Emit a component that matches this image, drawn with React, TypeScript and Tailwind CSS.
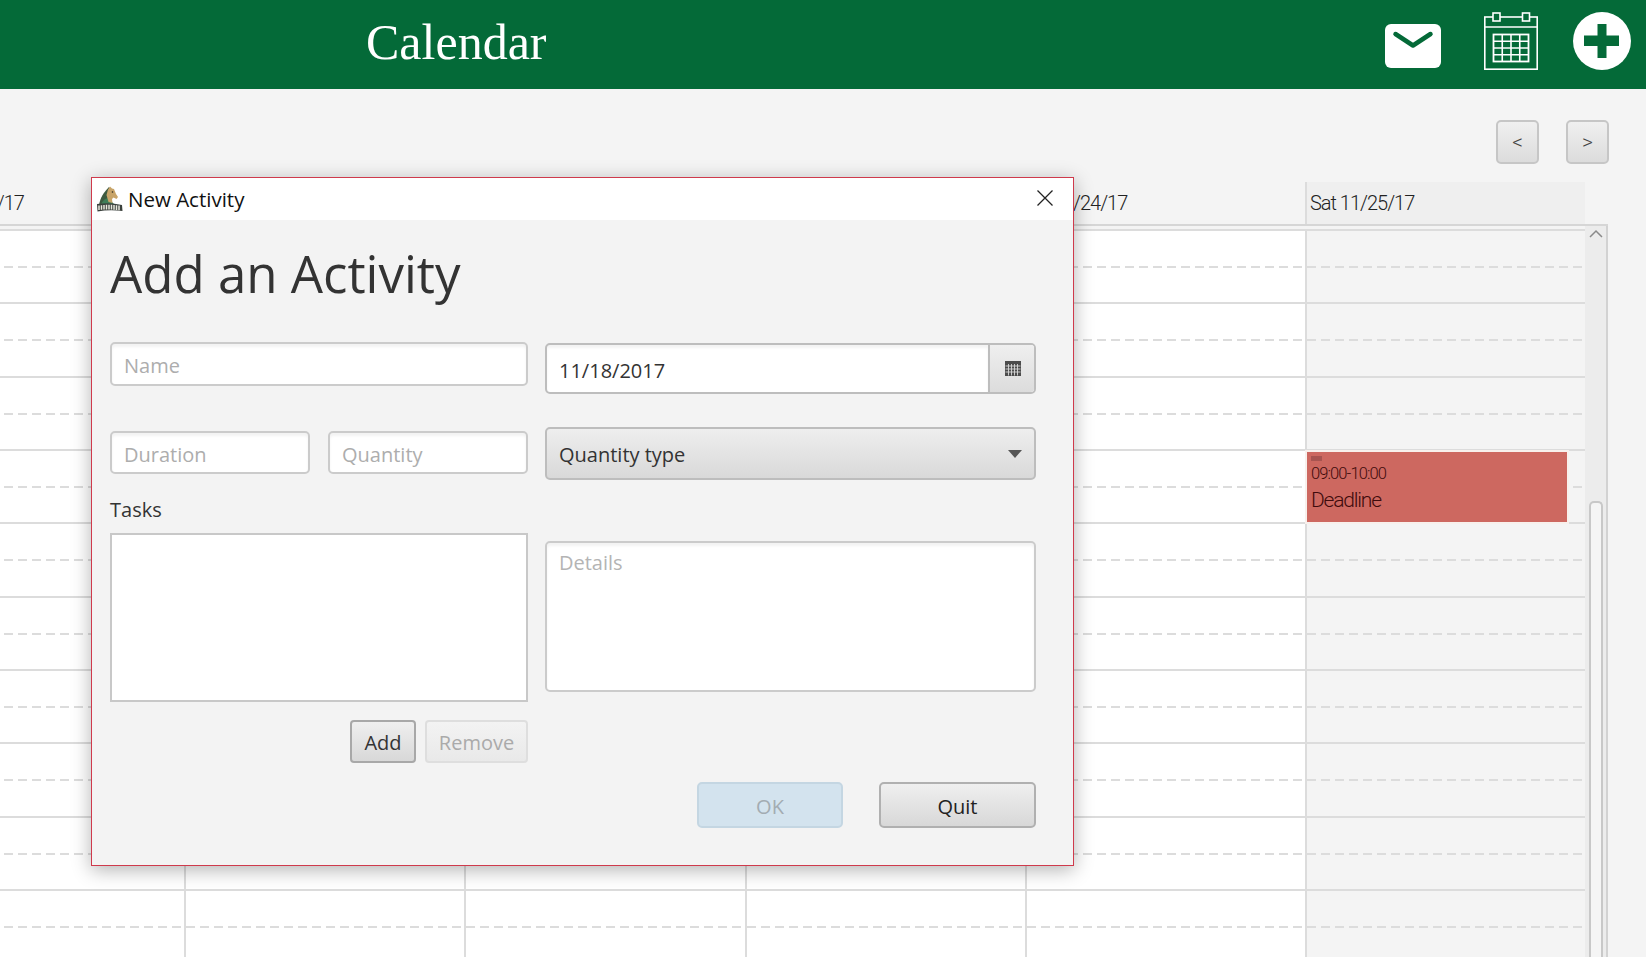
const days = [
  { label: "Mon 11/20/17", weekend: false, hidden: false },
  { label: "Tue 11/21/17", weekend: false, hidden: true },
  { label: "Wed 11/22/17", weekend: false, hidden: true },
  { label: "Thu 11/23/17", weekend: false, hidden: true },
  { label: "Fri 11/24/17", weekend: false, hidden: false },
  { label: "Sat 11/25/17", weekend: true, hidden: false },
];

const rows = Array.from({ length: 10 }, (_, i) => i);

function MailIcon() {
  return (
    <svg width="56" height="44" viewBox="0 0 56 44">
      <rect width="56" height="44" rx="6" fill="#ffffff" />
      <path d="M10.5 10 L28 21.5 L45.5 10" fill="none" stroke="#046a38" strokeWidth="4.5" strokeLinecap="round" strokeLinejoin="round" />
    </svg>
  );
}

function CalendarIcon() {
  return (
    <svg width="54" height="58" viewBox="0 0 54 58" fill="none" stroke="#ffffff" strokeWidth="1.6">
      <rect x="0.8" y="5" width="52.4" height="52.2" />
      <path d="M0.8 15 H53.2" />
      <rect x="9" y="1" width="7" height="8" fill="#046a38" />
      <rect x="38.5" y="1" width="7" height="8" fill="#046a38" />
      <rect x="9.5" y="22.5" width="35" height="27" strokeWidth="1.8" />
      <path d="M18.25 22.5 V49.5 M27 22.5 V49.5 M35.75 22.5 V49.5 M9.5 29.25 H44.5 M9.5 36 H44.5 M9.5 42.75 H44.5" />
    </svg>
  );
}

function PlusIcon() {
  return (
    <svg width="58" height="58" viewBox="0 0 58 58">
      <circle cx="29" cy="29" r="29" fill="#ffffff" />
      <path d="M24.5 12 H33.5 V23.5 H46 V34 H33.5 V46 H24.5 V34 H11 V23.5 H24.5 Z" fill="#046a38" />
    </svg>
  );
}

function Logo() {
  return (
    <svg width="27" height="26" viewBox="0 0 27 26">
      <path d="M3 19 C4 12 8 6 13 1 L15 4 L13 17 Z" fill="#3d5a40" />
      <path d="M5 18 C7 14 10 12 12 12 L18 18 Z" fill="#3f7d58" />
      <path d="M12 3.5 L14 0.5 L16 2.5 L18 3 L20 8 L22 11 L20.5 13 L17.5 11.5 L16 13 L16.5 17 L12.5 16 L10.5 9 Z" fill="#c8a469" />
      <circle cx="16.5" cy="6" r="0.8" fill="#2a2a22" />
      <path d="M1 18 Q13.5 16 26 19 L26.5 25 Q13 23.5 1.5 25.5 Z" fill="#3b413d" />
      <path d="M3 19.5 V24 M5.5 19.2 V23.8 M8 19 V23.6 M10.5 18.8 V23.5 M13 18.7 V23.5 M15.5 18.8 V23.6 M18 19 V23.8 M20.5 19.2 V24 M23 19.5 V24.2" stroke="#e9e8dd" strokeWidth="1.5" />
    </svg>
  );
}

function DateGlyph() {
  return (
    <svg width="16" height="15" viewBox="0 0 16 15">
      <rect width="16" height="15" fill="#4c4c4c" />
      <path d="M0.5 5 H15.5 M0.5 8 H15.5 M0.5 11 H15.5 M3.5 3 V14.5 M6.5 3 V14.5 M9.5 3 V14.5 M12.5 3 V14.5" stroke="#d8d8d8" strokeWidth="0.9" />
    </svg>
  );
}

function GridColumn({ weekend }: { weekend: boolean }) {
  return (
    <div className={`w-[280.2px] shrink-0 border-l-2 border-t-2 border-[#dcdcdc] ${weekend ? "bg-[#f4f4f4]" : "bg-white"}`}>
      {rows.map((r) => (
        <div key={r} className="h-[73.33px] border-b-2 border-[#dcdcdc] pt-[35px]">
          <div className="h-[2px] bg-[repeating-linear-gradient(90deg,#dcdcdc_0,#dcdcdc_9px,transparent_9px,transparent_14px)]" />
        </div>
      ))}
    </div>
  );
}

const inputBox = "bg-white border-2 border-[#cbcbcb] rounded-[5px] shadow-[inset_0_3px_3px_rgba(0,0,0,0.05)]";
const ph = "text-[20px] text-[#adadad] leading-none";

export default function App() {
  return (
    <div className="relative h-[957px] w-[1646px] overflow-hidden bg-[#f4f4f4] font-['Open_Sans',sans-serif]">
      <header className="h-[89px] bg-[#046a38] flex items-start">
        <h1 className="ml-[366px] mt-[13px] text-[50px] leading-[58px] text-white font-['Liberation_Serif',serif] font-normal">Calendar</h1>
        <div className="ml-auto flex items-start">
          <div className="mt-[24px] mr-[43px]"><MailIcon /></div>
          <div className="mt-[12px] mr-[35px]"><CalendarIcon /></div>
          <div className="mt-[12px] mr-[15px]"><PlusIcon /></div>
        </div>
      </header>

      <div className="h-[93px] flex items-start justify-end pt-[31px] pr-[37px] gap-[27px] font-['Roboto',sans-serif]">
        <button className="w-[43px] h-[44px] pt-[2px] rounded-[5px] border-2 border-[#c6c6c6] bg-gradient-to-b from-[#f0f0f0] to-[#dcdcdc] text-[#444] text-[21px] font-light">&lt;</button>
        <button className="w-[43px] h-[44px] pt-[2px] rounded-[5px] border-2 border-[#c6c6c6] bg-gradient-to-b from-[#f0f0f0] to-[#dcdcdc] text-[#444] text-[21px] font-light">&gt;</button>
      </div>

      <div className="flex -ml-[96px] h-[42px] font-['Roboto',sans-serif]">
        {days.map((d) => (
          <div key={d.label} className={`w-[280.2px] shrink-0 flex items-center pl-[3px] border-l-2 text-[20px] tracking-[-1px] font-light text-[#222] ${d.weekend ? "bg-[#efefef] border-[#dcdcdc]" : "border-transparent"}`}>
            {d.hidden ? "" : d.label}
          </div>
        ))}
      </div>

      <div className="relative w-[1608px] h-[733px] overflow-hidden border-t-2 border-[#d6d6d6] flex">
        <div className="flex -ml-[96px] w-[1681px] shrink-0 pt-[3px] bg-[#f4f4f4]">
          {days.map((d) => (
            <GridColumn key={d.label} weekend={d.weekend} />
          ))}
        </div>
        <div className="w-[23px] shrink-0 border-r-2 border-[#d2d2d2] bg-[#ececec] flex flex-col items-center">
          <svg width="16" height="10" viewBox="0 0 16 10" className="mt-[3px]">
            <path d="M2 8 L8 2 L14 8" fill="none" stroke="#8a8a8a" strokeWidth="1.5" />
          </svg>
          <div className="mt-[262px] w-[14px] flex-1 rounded-t-[5px] border-2 border-b-0 border-[#c8c8c8] bg-[#f5f5f5]" />
        </div>
        <div className="absolute left-[1307px] top-[226px] w-[260px] h-[70px] bg-[#cd6860] outline-2 outline-[#f8f0ec] pl-[4px] font-['Roboto',sans-serif] text-[#3f0b0c]">
          <div className="mt-[4px] w-[11px] h-[5px] bg-[#a85450]" />
          <div className="mt-[3px] text-[16.5px] font-light leading-[20px] tracking-[-0.9px]">09:00-10:00</div>
          <div className="mt-[3px] text-[21px] font-light leading-[26px] tracking-[-1.2px]">Deadline</div>
        </div>
      </div>

      {/* Dialog */}
      <div className="absolute left-[91px] top-[177px] w-[983px] h-[689px] bg-[#f3f3f3] border border-[#cf3a4c] shadow-[0_4px_18px_rgba(0,0,0,0.3)]">
        <div className="h-[42px] bg-white flex items-center pl-[4px] pr-[19px]">
          <Logo />
          <span className="ml-[5px] text-[20.5px] text-[#111] leading-none">New Activity</span>
          <svg width="18" height="18" viewBox="0 0 18 18" className="ml-auto -mt-[2px]">
            <path d="M1.5 1.5 L16.5 16.5 M16.5 1.5 L1.5 16.5" stroke="#222" strokeWidth="1.3" />
          </svg>
        </div>
        <div className="pl-[18px] pr-[17px]">
          <h2 className="mt-[18px] text-[51px] leading-[70px] text-[#333] font-normal">Add an Activity</h2>
          <div className="mt-[34px] flex gap-[17px]">
            <div className="w-[418px] shrink-0">
              <div className={`${inputBox} h-[44px] flex items-center px-[12px] pt-[4px]`}>
                <span className={ph}>Name</span>
              </div>
              <div className="mt-[45px] flex gap-[18px]">
                <div className={`${inputBox} w-[200px] h-[43px] flex items-center px-[12px] pt-[4px]`}>
                  <span className={ph}>Duration</span>
                </div>
                <div className={`${inputBox} w-[200px] h-[43px] flex items-center px-[12px] pt-[4px]`}>
                  <span className={ph}>Quantity</span>
                </div>
              </div>
              <div className="mt-[22px] h-[37px] text-[20px] leading-[28px] text-[#333]">Tasks</div>
              <div className="h-[169px] bg-white border-2 border-[#c8c8c8]" />
              <div className="mt-[18px] flex justify-end gap-[9px]">
                <button className="w-[66px] h-[43px] pt-[3px] rounded-[4px] border-2 border-[#a8a8a8] bg-gradient-to-b from-[#efefef] to-[#d8d8d8] text-[20px] text-[#333]">Add</button>
                <button className="w-[103px] h-[43px] pt-[3px] rounded-[4px] border-2 border-[#dedede] bg-gradient-to-b from-[#f3f3f3] to-[#e9e9e9] text-[20px] text-[#aaa]">Remove</button>
              </div>
            </div>
            <div className="w-[491px] shrink-0 pt-[1px]">
              <div className="h-[51px] flex rounded-[5px] border-2 border-[#bdbdbd] bg-white overflow-hidden">
                <div className="flex-1 flex items-center px-[12px] pt-[4px] text-[20px] text-[#333] shadow-[inset_0_3px_3px_rgba(0,0,0,0.05)]">11/18/2017</div>
                <div className="w-[46px] border-l-2 border-[#bdbdbd] pl-[2px] bg-gradient-to-b from-[#efefef] to-[#dcdcdc] flex items-center justify-center">
                  <DateGlyph />
                </div>
              </div>
              <div className="mt-[33px] h-[53px] flex items-center justify-between px-[12px] rounded-[5px] border-2 border-[#bdbdbd] bg-gradient-to-b from-[#eeeeee] to-[#d9d9d9] text-[20px] text-[#333]">
                <span className="pt-[2px]">Quantity type</span>
                <svg width="14" height="8" viewBox="0 0 14 8"><path d="M0 0 H14 L7 8 Z" fill="#555" /></svg>
              </div>
              <div className={`mt-[61px] ${inputBox} h-[151px] px-[12px] pt-[6px]`}>
                <span className="text-[20px] text-[#b4b4b4] leading-[28px]">Details</span>
              </div>
              <div className="mt-[90px] flex justify-end gap-[36px]">
                <button className="w-[146px] h-[46px] pt-[3px] rounded-[5px] border-2 border-[#c4d6e2] bg-[#d3e3ee] text-[20px] text-[#a3acb2]">OK</button>
                <button className="w-[157px] h-[46px] pt-[3px] rounded-[5px] border-2 border-[#b0b0b0] bg-gradient-to-b from-[#efefef] to-[#d8d8d8] text-[20px] text-[#222]">Quit</button>
              </div>
            </div>
          </div>
        </div>
      </div>
    </div>
  );
}
